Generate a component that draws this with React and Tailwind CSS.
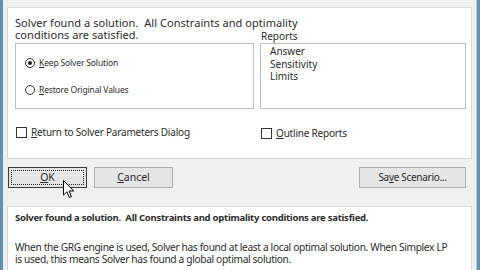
import React from "react";

const font = { fontFamily: '"Noto Sans", "Open Sans", sans-serif' };

function Radio({ checked }) {
  return (
    <span className="w-[10px] h-[10px] rounded-full border border-[#333] bg-white flex items-center justify-center shrink-0">
      {checked && <span className="w-[4px] h-[4px] rounded-full bg-[#222]" />}
    </span>
  );
}

function Check() {
  return <span className="w-[11px] h-[11px] border border-[#333] bg-white shrink-0" />;
}

function Cursor() {
  return (
    <svg className="absolute left-[63px] top-[180px]" width="12" height="19" viewBox="0 0 12 19">
      <path d="M0.5 0.5 L0.5 15 L4 11.8 L6.3 17.5 L8.4 16.6 L6.1 11 L10.8 11 Z" fill="#fff" stroke="#000" strokeWidth="1" strokeLinejoin="round" />
    </svg>
  );
}

export default function App() {
  return (
    <div className="relative w-[480px] h-[270px] overflow-hidden bg-[#f0f0f0] flex text-[#2b2b2b]" style={font}>
      <div className="w-[3px] bg-[#5f93b3] shrink-0" />
      <div className="flex-1 flex flex-col pl-[4px]">
        {/* top panel */}
        <div className="mt-[7px] w-[465px] h-[152px] bg-white border border-[#d8d8d8] pl-[7px] pt-[9px] text-[11px] leading-[12px]">
          <div className="h-[12px] whitespace-nowrap tracking-[0.05px]">Solver found a solution.&nbsp; All Constraints and optimality</div>
          <div className="flex">
            <div className="w-[239px]">
              <div className="h-[12px] whitespace-nowrap tracking-[0.05px]">conditions are satisfied.</div>
              <div className="mt-[2px] h-[66px] border border-[#bdbdbd] flex flex-col pl-[9px] text-[8.5px] tracking-[-0.15px]">
                <div className="mt-[13px] flex items-center gap-[4px] h-[12px]">
                  <Radio checked />
                  <span><u className="underline-offset-1">K</u>eep Solver Solution</span>
                </div>
                <div className="mt-[15px] flex items-center gap-[4px] h-[12px]">
                  <Radio />
                  <span><u className="underline-offset-1">R</u>estore Original Values</span>
                </div>
              </div>
            </div>
            <div className="ml-[6px]">
              <div className="h-[12px] pl-[1px] relative top-[1px] text-[10px]">Reports</div>
              <div className="mt-[2px] w-[206px] h-[66px] border border-[#bdbdbd] pl-[9px] pt-[1px] text-[10px] leading-[12.5px]">
                <div>Answer</div>
                <div>Sensitivity</div>
                <div>Limits</div>
              </div>
            </div>
          </div>
          <div className="flex mt-[16px] items-center text-[10px] tracking-[-0.2px]">
            <div className="w-[246px] flex items-center gap-[4px] pl-[1px]">
              <Check />
              <span className="whitespace-nowrap"><u className="underline-offset-1">R</u>eturn to Solver Parameters Dialog</span>
            </div>
            <div className="flex items-center gap-[4px] mt-[2px]">
              <Check />
              <span className="whitespace-nowrap"><u className="underline-offset-1">O</u>utline Reports</span>
            </div>
          </div>
        </div>
        {/* buttons */}
        <div className="h-[47px] flex items-start pl-[1px] pr-[9px] pt-[8px] text-[10.5px]">
          <div className="relative w-[79px] h-[21px] bg-[#e5e5e5] border border-[#3a3a3a] flex items-center justify-center">
            <span className="absolute inset-[2px] border border-dotted border-[#222]" />
            <span><u className="underline-offset-1">O</u>K</span>
          </div>
          <div className="ml-[7px] w-[79px] h-[21px] bg-[#e5e5e5] border border-[#adadad] flex items-center justify-center">
            <span><u className="underline-offset-1">C</u>ancel</span>
          </div>
          <div className="ml-auto w-[107px] h-[21px] bg-[#e5e5e5] border border-[#adadad] flex items-center justify-center text-[10px] tracking-[-0.3px]">
            <span>Sa<u className="underline-offset-1">v</u>e Scenario...</span>
          </div>
        </div>
        {/* bottom panel */}
        <div className="w-[465px] flex-1 bg-white border border-[#d8d8d8] border-b-0 pl-[7px] pt-[5px] text-[10.2px] leading-[12px] tracking-[-0.35px]">
          <div className="font-bold whitespace-nowrap text-[9.5px] tracking-[-0.25px]">Solver found a solution.&nbsp; All Constraints and optimality conditions are satisfied.</div>
          <div className="mt-[17px] whitespace-nowrap">When the GRG engine is used, Solver has found at least a local optimal solution. When Simplex LP</div>
          <div className="whitespace-nowrap">is used, this means Solver has found a global optimal solution.</div>
        </div>
      </div>
      <div className="w-[1px] bg-[#c9c9c9] ml-[1px]" />
      <div className="w-[3px] bg-[#5f93b3] shrink-0" />
      <Cursor />
    </div>
  );
}
